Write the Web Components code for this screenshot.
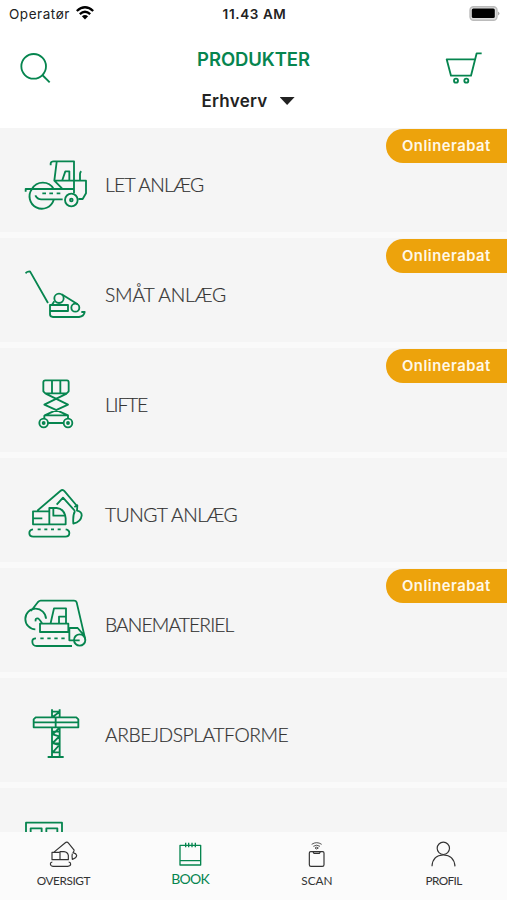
<!DOCTYPE html>
<html lang="da">
<head>
<meta charset="utf-8">
<title>Produkter</title>
<style>
  body {
    margin: 0;
    background: #fff;
    font-family: Lato, "Open Sans", sans-serif;
  }
</style>
</head>
<body>
<rental-app></rental-app>

<script>
const icons = {
  search: ['55 150 100 105', `<circle cx="99" cy="199" r="37"/><path d="M125 225L147 247"/>`],
  cart: ['570 150 125 105', `<path d="M686 160H671L654 227H594L581 178H666"/><circle cx="609" cy="242" r="6"/><circle cx="640" cy="242" r="6"/>`],
  roller: ['30 45 210 180', `<path d="M47 155V147H191M66 147A37 37 0 1 0 131 180M66 147A37 37 0 0 1 131 147M76 166Q82 178 94 178H158M97 160H108M118 160H129M140 160H151M122 76V70Q123 64 131 64H192V160M140 66L133 122L156 145M133 122H228V160L218 177H205M157 120L166 94H178V120M210 122V102Q210 97 214 94"/><circle cx="184" cy="180" r="19"/><circle cx="184" cy="180" r="4"/>`],
  plate: ['30 30 210 180', `<path d="M47 55Q50 49 60 49L114 144M155 118L203 148M133 139L126 149M120 150H174V168H120ZM120 160V178Q120 186 129 186H207Q222 184 224 171H214"/><circle cx="147" cy="130" r="14"/><circle cx="196" cy="158" r="12"/>`],
  lift: ['30 30 210 180', `<path d="M106 46H171Q176 46 176 52V79L170 85H106L100 79V52Q100 46 106 46ZM126 46V85M151 46V85M107 86L174 119L104 151H174L103 119L170 86M103 151V161M174 151V161M114 174H161"/><circle cx="101" cy="174" r="13"/><circle cx="174" cy="174" r="13"/><circle cx="101" cy="174" r="3"/><circle cx="174" cy="174" r="3"/>`],
  excavator: ['30 30 210 180', `<path d="M82 107L151 48Q158 42 164 49L201 93M140 89L159 68L195 108M116 109H69V148H167V130Q164 101 140 99H118V148M69 130H97M130 101V122H165M193 96L202 91L201 107Q216 110 215 122Q213 141 190 146Q188 120 195 108M69 163Q58 165 58 174Q58 185 70 185H166Q178 185 178 174Q178 165 167 163M83 163H92M103 163H112M123 163H132M143 163H152"/>`],
  track: ['30 30 210 180', `<path d="M63 78L84 51Q88 47 92 47H192Q198 47 200 52L226 164M108 101A31 31 0 1 0 76 133M77 109Q75 100 83 100Q87 100 97 116M90 116H175V141H90ZM122 114L132 70H168V114M147 114V95H168M178 129H203L222 151M178 129V166H209M78 160Q66 160 67 171Q68 183 80 183H186M91 160H101M112 160H122M133 160H143M154 160H164"/><circle cx="209" cy="165" r="17"/>`],
  platform: ['30 30 210 180', `<path d="M126 43V66M149 43V66M126 50H149L128 66M77 67H199L205 73V97H71V73ZM71 82H205M137 67V97M126 97V185M149 97V185M148 99L128 118L148 124L128 144L148 150L128 172M126 110H149M126 145H149M126 172H149M113 186H161"/>`],
  cabin: ['60 105 210 180', `<path d="M78 190V128H186V190M92 175V145H125V175M139 175V145H172V175"/>`],
  oversigt: ['140 180 105 90', `<path d="M163 217L197 189Q203 184 208 190L225 211M180 217H158V239H207V226Q205 216 194 215H182V239M219 221Q217 228 219 238Q232 234 232 226Q231 221 221 218L225 211M159 246Q153 247 153 252Q154 259 162 259H205Q214 258 214 252Q214 247 208 246"/>`],
  book: ['520 180 105 90', `<path d="M541 196H603V255H541ZM541 242H603M558 188V202M567 188V202M577 188V202M587 188V202"/>`],
  scan: ['140 180 105 90', `<path d="M175 215H211Q215 215 215 219V254Q215 259 210 259H176Q171 259 171 254V219Q171 215 175 215ZM182 216L185 220H201L204 216"/><path stroke-width="2.500" d="M178 193Q193 183 208 193M183 199Q193 192 203 199M188 204Q193 199 198 204L193 207Z"/>`],
  profil: ['520 180 105 90', `<circle cx="572" cy="205" r="18.500"/><path d="M538 259Q540 225 572 225Q604 225 607 259"/>`]
};

class LineIcon extends HTMLElement {
  constructor() {
    super();
    this.attachShadow({ mode: 'open' });
  }

  connectedCallback() {
    const [box, shapes] = icons[this.getAttribute('name')];
    this.shadowRoot.innerHTML = `
      <style>
      :host { display: block; }
      svg {
        display: block;
        width: 100%;
        height: 100%;
        fill: none;
        stroke: currentColor;
        stroke-width: var(--line, 5.500);
        stroke-linejoin: round;
      }
      </style>
      <svg viewBox="${box}">${shapes}</svg>
    `;
  }
}
customElements.define('line-icon', LineIcon);

class StatusBar extends HTMLElement {
  constructor() {
    super();
    this.attachShadow({ mode: 'open' }).innerHTML = `
      <style>
      :host {
        display: grid;
        grid-template-columns: 1fr auto 1fr;
        align-items: center;
        height: 28px;
        padding: 0 7px 0 9px;
        box-sizing: border-box;
        font-family: Inter, sans-serif;
        font-size: 13.500px;
        color: #222;
      }
      .carrier { display: flex; align-items: center; gap: 6px; letter-spacing: .55px; }
      .wifi { width: 18px; height: 14px; margin-top: -3px; }
      .time { font-weight: 600; letter-spacing: .6px; }
      .battery { width: 31px; height: 15px; justify-self: end; margin-top: -2px; }
      </style>
      <div class="carrier">
        <span>Operatør</span>
        <svg class="wifi" viewBox="0 0 18 14" fill="none" stroke="#000" stroke-width="2.300">
          <path d="M.8 5Q9-2.500 17.200 5M3.800 8.200Q9 3.200 14.200 8.200"/>
          <path d="M5.900 10.300Q9 7.700 12.100 10.300L9 13.500Z" fill="#000" stroke="none"/>
        </svg>
      </div>
      <span class="time">11.43 AM</span>
      <svg class="battery" viewBox="0 0 31 15">
        <rect x="1" y=".7" width="27" height="13.500" rx="3.500" fill="#ddd" stroke="#bbb" stroke-width="1.400"/>
        <rect x="2.800" y="2.600" width="23" height="9.500" rx="1.500"/>
        <path d="M29 5.500Q32 7.500 29 9.500Z" fill="#aaa"/>
      </svg>
    `;
  }
}
customElements.define('status-bar', StatusBar);

class PageHeader extends HTMLElement {
  constructor() {
    super();
    this.attachShadow({ mode: 'open' }).innerHTML = `
      <style>
      :host {
        display: grid;
        grid-template-columns: 42px 1fr 42px;
        height: 100px;
        padding: 22px 22px 0 19px;
        box-sizing: border-box;
        font-family: Inter, sans-serif;
        color: #06854f;
      }
      .search { width: 33.330px; height: 35px; }
      .cart { width: 41.670px; height: 35px; }
      .middle {
        display: flex;
        flex-direction: column;
        align-items: center;
        gap: 18px;
      }
      h1 { margin: -3px 0 0 3px; font-size: 18.500px; line-height: 24px; font-weight: 600; letter-spacing: -.1px; }
      .filter { display: flex; align-items: center; gap: 12px; margin-right: 8px; color: #222; font-weight: 600; font-size: 17px; line-height: 24px; letter-spacing: .3px; }
      .arrow { width: 15px; height: 8px; background: #222; clip-path: polygon(0 0, 100% 0, 50% 100%); }
      </style>
      <line-icon class="search" name="search"></line-icon>
      <div class="middle">
        <h1><slot name="title"></slot></h1>
        <div class="filter"><slot></slot><span class="arrow"></span></div>
      </div>
      <line-icon class="cart" name="cart"></line-icon>
    `;
  }
}
customElements.define('page-header', PageHeader);

class ProductRow extends HTMLElement {
  constructor() {
    super();
    this.attachShadow({ mode: 'open' });
  }

  connectedCallback() {
    const badge = this.hasAttribute('rabat') ? '<span class="badge">Onlinerabat</span>' : '';
    this.shadowRoot.innerHTML = `
      <style>
      :host {
        display: flex;
        position: relative;
        flex: none;
        height: 104px;
        padding: 27px 0 0 20px;
        box-sizing: border-box;
        background: #f5f5f5;
        color: #333;
      }
      line-icon { width: 70px; height: 60px; color: #06854f; }
      .label {
        margin-left: 15px;
        font-size: 19.300px;
        font-weight: 300;
        line-height: 60px;
        letter-spacing: var(--track, 0);
        white-space: nowrap;
        -webkit-text-stroke: .2px #333;
      }
      .badge {
        position: absolute;
        top: 1px;
        right: 0;
        width: 121px;
        height: 34px;
        padding-left: 16px;
        box-sizing: border-box;
        border-radius: 17px 0 0 17px;
        background: #eda30c;
        color: #fff8e8;
        font: 600 14.800px/34px Inter, sans-serif;
        letter-spacing: .5px;
      }
      </style>
      <line-icon name="${this.getAttribute('icon')}"></line-icon>
      <span class="label"><slot></slot></span>
      ${badge}
    `;
  }
}
customElements.define('product-row', ProductRow);

class TabItem extends HTMLElement {
  constructor() {
    super();
    this.attachShadow({ mode: 'open' });
  }

  connectedCallback() {
    this.shadowRoot.innerHTML = `
      <style>
      :host {
        display: flex;
        flex: 1;
        flex-direction: column;
        align-items: center;
        padding-top: 8px;
        color: #333;
        font-size: 11.800px;
        --line: 3.500;
      }
      :host([active]) { color: #06854f; font-size: 14px; --line: 4; }
      line-icon { width: 35px; height: 30px; }
      span { line-height: 20px; letter-spacing: var(--track, 0); }
      :host([active]) span { margin-top: -1px; }
      :host(:not([active])) span { margin-top: 1px; }
      </style>
      <line-icon name="${this.getAttribute('icon')}"></line-icon>
      <span><slot></slot></span>
    `;
  }
}
customElements.define('tab-item', TabItem);

class RentalApp extends HTMLElement {
  constructor() {
    super();
    this.attachShadow({ mode: 'open' }).innerHTML = `
      <style>
      :host {
        display: flex;
        flex-direction: column;
        width: 507px;
        height: 900px;
        overflow: hidden;
      }
      main {
        display: flex;
        flex: 1;
        flex-direction: column;
        gap: 6px;
        min-height: 0;
        overflow: hidden;
        background: #fafafa;
      }
      nav { display: flex; height: 68px; background: #fbfbfb; }
      </style>
      <status-bar></status-bar>
      <page-header><span slot="title">PRODUKTER</span>Erhverv</page-header>
      <main>
        <product-row icon="roller" style="--track: -.7px" rabat>LET ANLÆG</product-row>
        <product-row icon="plate" style="--track: -.2px" rabat>SMÅT ANLÆG</product-row>
        <product-row icon="lift" style="--track: -1.2px" rabat>LIFTE</product-row>
        <product-row icon="excavator" style="--track: -.5px">TUNGT ANLÆG</product-row>
        <product-row icon="track" style="--track: -.9px" rabat>BANEMATERIEL</product-row>
        <product-row icon="platform" style="--track: -.45px">ARBEJDSPLATFORME</product-row>
        <product-row icon="cabin"></product-row>
      </main>
      <nav>
        <tab-item icon="oversigt" style="--track: -.4px">OVERSIGT</tab-item>
        <tab-item icon="book" style="--track: -.8px" active>BOOK</tab-item>
        <tab-item icon="scan">SCAN</tab-item>
        <tab-item icon="profil" style="--track: -.6px">PROFIL</tab-item>
      </nav>
    `;
  }
}
customElements.define('rental-app', RentalApp);
</script>
</body>
</html>
